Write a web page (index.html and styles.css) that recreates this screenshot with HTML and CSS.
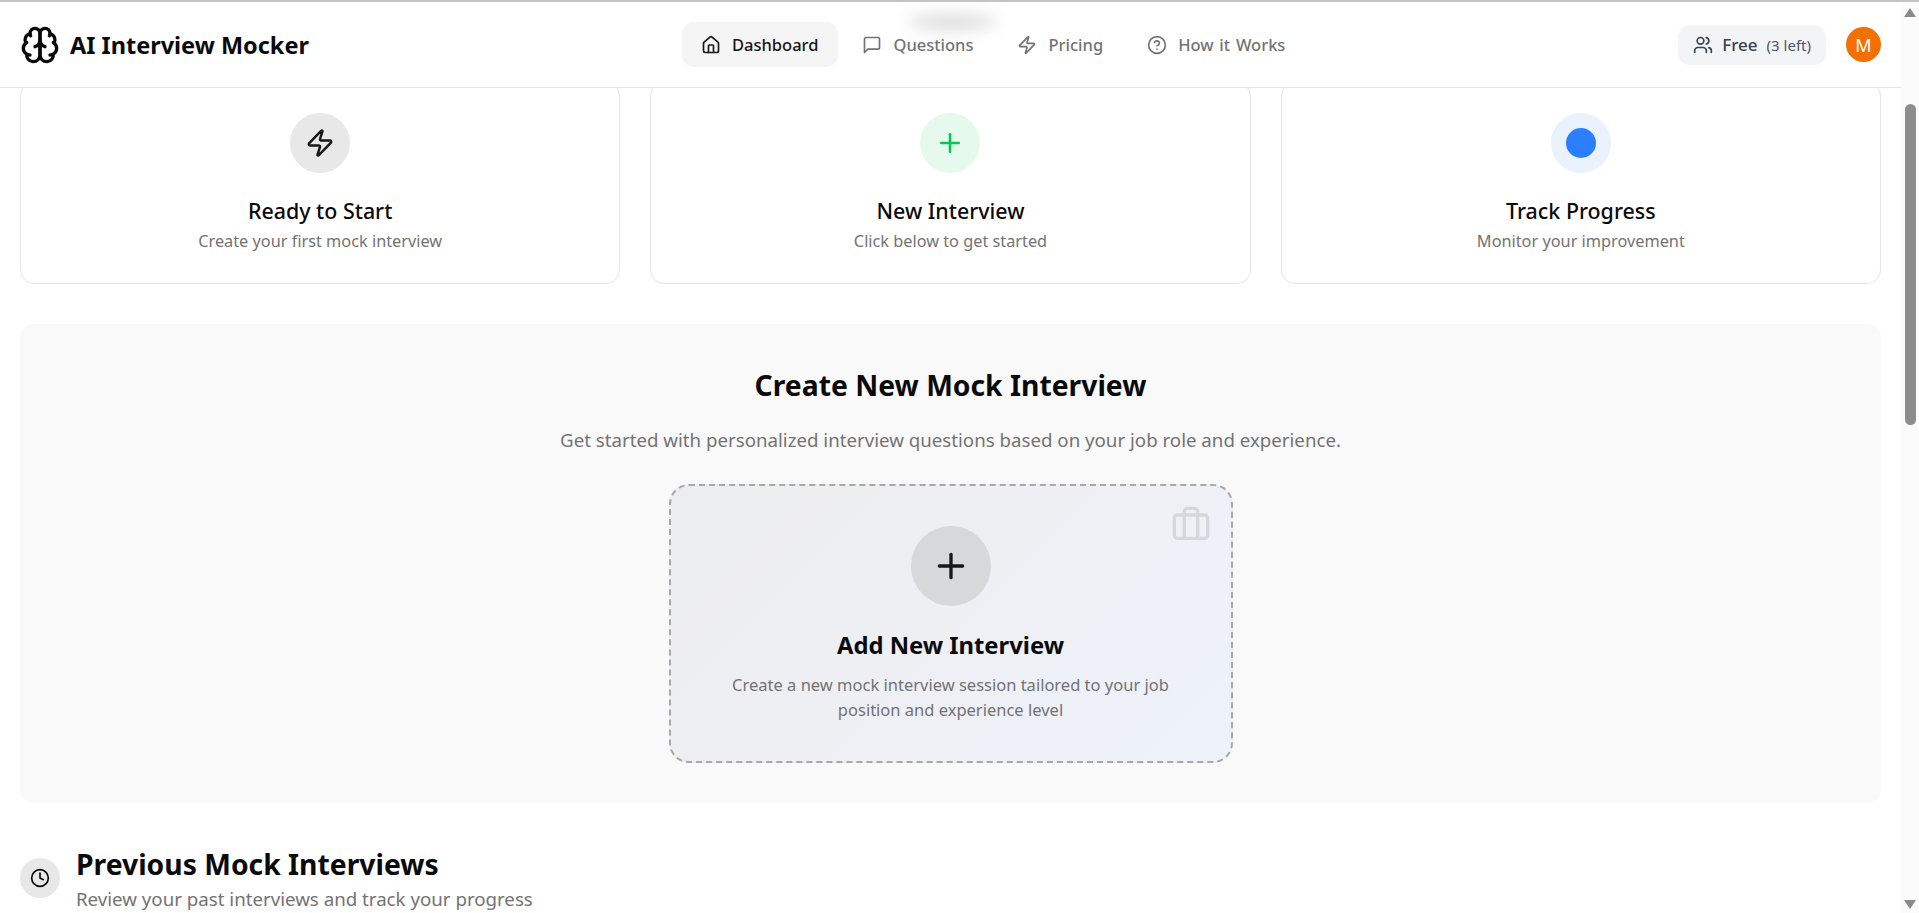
FILE: index.html
```html
<!DOCTYPE html>
<html lang="en">
<head>
    <meta charset="UTF-8">
    <meta name="viewport" content="width=device-width, initial-scale=1.0">
    <title>AI Interview Mocker</title>
    <link rel="stylesheet" href="styles.css">
</head>
<body>
    <div class="page">
        <div class="content">
            <header class="header">
                <div class="header-smudge"></div>
                <div class="brand">
                    <svg class="brand-icon" viewBox="0 0 24 24"><path d="M12 5a3 3 0 1 0-5.997.125 4 4 0 0 0-2.526 5.77 4 4 0 0 0 .556 6.588A4 4 0 1 0 12 18Z"/><path d="M12 5a3 3 0 1 1 5.997.125 4 4 0 0 1 2.526 5.77 4 4 0 0 1-.556 6.588A4 4 0 1 1 12 18Z"/><path d="M15 13a4.5 4.5 0 0 1-3-4 4.5 4.5 0 0 1-3 4"/><path d="M17.599 6.5a3 3 0 0 0 .399-1.375"/><path d="M6.003 5.125A3 3 0 0 0 6.401 6.5"/><path d="M3.477 10.896a4 4 0 0 1 .585-.396"/><path d="M19.938 10.5a4 4 0 0 1 .585.396"/><path d="M6 18a4 4 0 0 1-1.967-.516"/><path d="M19.967 17.484A4 4 0 0 1 18 18"/></svg>
                    <span class="brand-name">AI Interview Mocker</span>
                </div>
                <nav class="nav">
                    <a class="nav-item active">
                        <svg class="icon" viewBox="0 0 24 24"><path d="M15 21v-8a1 1 0 0 0-1-1h-4a1 1 0 0 0-1 1v8"/><path d="M3 10a2 2 0 0 1 .709-1.528l7-5.999a2 2 0 0 1 2.582 0l7 5.999A2 2 0 0 1 21 10v9a2 2 0 0 1-2 2H5a2 2 0 0 1-2-2z"/></svg>
                        Dashboard
                    </a>
                    <a class="nav-item">
                        <svg class="icon" viewBox="0 0 24 24"><path d="M21 15a2 2 0 0 1-2 2H7l-4 4V5a2 2 0 0 1 2-2h14a2 2 0 0 1 2 2z"/></svg>
                        Questions
                    </a>
                    <a class="nav-item">
                        <svg class="icon" viewBox="0 0 24 24"><path d="M4 14a1 1 0 0 1-.78-1.63l9.9-10.2a.5.5 0 0 1 .86.46l-1.92 6.02A1 1 0 0 0 13 10h7a1 1 0 0 1 .78 1.63l-9.9 10.2a.5.5 0 0 1-.86-.46l1.92-6.02A1 1 0 0 0 11 14z"/></svg>
                        Pricing
                    </a>
                    <a class="nav-item">
                        <svg class="icon" viewBox="0 0 24 24"><circle cx="12" cy="12" r="10"/><path d="M9.09 9a3 3 0 0 1 5.83 1c0 2-3 3-3 3"/><path d="M12 17h.01"/></svg>
                        How it Works
                    </a>
                </nav>
                <div class="account">
                    <div class="plan">
                        <svg class="icon" viewBox="0 0 24 24"><path d="M16 21v-2a4 4 0 0 0-4-4H6a4 4 0 0 0-4 4v2"/><circle cx="9" cy="7" r="4"/><path d="M22 21v-2a4 4 0 0 0-3-3.87"/><path d="M16 3.13a4 4 0 0 1 0 7.75"/></svg>
                        <span class="plan-name">Free</span>
                        <span class="plan-left">(3 left)</span>
                    </div>
                    <div class="avatar">M</div>
                </div>
            </header>

            <main class="main">
                <section class="cards">
                    <div class="card">
                        <div class="card-icon gray">
                            <svg class="icon-md" viewBox="0 0 24 24"><path d="M4 14a1 1 0 0 1-.78-1.63l9.9-10.2a.5.5 0 0 1 .86.46l-1.92 6.02A1 1 0 0 0 13 10h7a1 1 0 0 1 .78 1.63l-9.9 10.2a.5.5 0 0 1-.86-.46l1.92-6.02A1 1 0 0 0 11 14z"/></svg>
                        </div>
                        <h3>Ready to Start</h3>
                        <p>Create your first mock interview</p>
                    </div>
                    <div class="card">
                        <div class="card-icon green">
                            <svg class="icon-md" viewBox="0 0 24 24"><path d="M5 12h14"/><path d="M12 5v14"/></svg>
                        </div>
                        <h3>New Interview</h3>
                        <p>Click below to get started</p>
                    </div>
                    <div class="card">
                        <div class="card-icon blue"><div class="dot"></div></div>
                        <h3>Track Progress</h3>
                        <p>Monitor your improvement</p>
                    </div>
                </section>

                <section class="create">
                    <h2>Create New Mock Interview</h2>
                    <p class="create-sub">Get started with personalized interview questions based on your job role and experience.</p>
                    <div class="add-card">
                        <svg class="add-bag" viewBox="0 0 24 24"><path d="M16 20V4a2 2 0 0 0-2-2h-4a2 2 0 0 0-2 2v16"/><rect width="20" height="14" x="2" y="6" rx="2"/></svg>
                        <div class="add-icon">
                            <svg class="icon-lg" viewBox="0 0 24 24"><path d="M5 12h14"/><path d="M12 5v14"/></svg>
                        </div>
                        <h3>Add New Interview</h3>
                        <p>Create a new mock interview session tailored to your job position and experience level</p>
                    </div>
                </section>

                <section class="previous">
                    <div class="previous-icon">
                        <svg class="icon" viewBox="0 0 24 24"><circle cx="12" cy="12" r="10"/><polyline points="12 6 12 12 16 14"/></svg>
                    </div>
                    <div>
                        <h2>Previous Mock Interviews</h2>
                        <p>Review your past interviews and track your progress</p>
                    </div>
                </section>
            </main>
        </div>

        <div class="scrollbar">
            <div class="arrow-up"></div>
            <div class="thumb"></div>
            <div class="arrow-down"></div>
        </div>
    </div>
</body>
</html>
```

FILE: styles.css
```css
* {
    box-sizing: border-box;
}
body {
    margin: 0;
    height: 913px;
    overflow: hidden;
    background-color: white;
    color: #0a0a0a;
    font-family: "Noto Sans", "Open Sans", Arial, sans-serif;
}
h2, h3, p {
    margin: 0;
}
svg {
    fill: none;
    stroke: currentColor;
    stroke-width: 2;
    stroke-linecap: round;
    stroke-linejoin: round;
    flex-shrink: 0;
}
.icon {
    width: 20px;
    height: 20px;
}
.icon-md {
    width: 30px;
    height: 30px;
}
.icon-lg {
    width: 40px;
    height: 40px;
}
.page {
    display: flex;
    height: 913px;
    border-top: 2px solid #c4c4c4;
}
.content {
    flex: 1;
    min-width: 0;
    overflow: hidden;
}

/* header */
.header {
    position: relative;
    z-index: 1;
    display: flex;
    align-items: center;
    height: 86px;
    padding: 0 20px;
    border-bottom: 1px solid #e5e5e5;
    background-color: white;
}
.header-smudge {
    position: absolute;
    left: 908px;
    top: 13px;
    width: 88px;
    height: 14px;
    border-radius: 50%;
    background-color: #d8d8d8;
    filter: blur(8px);
}
.brand {
    display: flex;
    align-items: center;
    gap: 10px;
}
.brand-icon {
    width: 40px;
    height: 40px;
}
.brand-name {
    font-size: 23.5px;
    font-weight: 700;
    white-space: nowrap;
}
.nav {
    position: relative;
    display: flex;
    align-items: center;
    gap: 5px;
    margin-left: 373px;
}
.nav-item {
    display: flex;
    align-items: center;
    gap: 11px;
    height: 45px;
    padding: 0 20px 0 19px;
    border-radius: 12px;
    font-size: 16.5px;
    font-weight: 500;
    word-spacing: 1.5px;
    color: #737373;
}
.nav-item.active {
    background-color: #f5f5f5;
    color: #171717;
}
.account {
    display: flex;
    align-items: center;
    gap: 20px;
    margin-left: auto;
}
.plan {
    display: flex;
    align-items: center;
    gap: 9px;
    height: 40px;
    padding: 0 15px;
    border-radius: 12px;
    background-color: #f3f4f6;
    color: #364153;
}
.plan-name {
    font-size: 17px;
    font-weight: 500;
}
.plan-left {
    font-size: 15px;
    color: #4a5565;
}
.avatar {
    display: flex;
    align-items: center;
    justify-content: center;
    width: 35px;
    height: 35px;
    border-radius: 50%;
    background-color: #f36f00;
    color: white;
    font-size: 18px;
}

/* top cards, scrolled partly under the header */
.main {
    padding: 0 20px;
}
.cards {
    display: grid;
    grid-template-columns: repeat(3, 1fr);
    gap: 30px;
    margin-top: -6px;
}
.card {
    display: flex;
    flex-direction: column;
    align-items: center;
    height: 202px;
    padding-top: 30px;
    border: 1px solid #e5e5e5;
    border-radius: 14px;
    background-color: white;
}
.card h3 {
    margin-top: 23px;
    font-size: 21.4px;
    line-height: 30px;
    font-weight: 500;
}
.card p {
    margin-top: 3px;
    font-size: 16.3px;
    line-height: 24px;
    color: #737373;
}
.card-icon {
    display: flex;
    align-items: center;
    justify-content: center;
    width: 60px;
    height: 60px;
    border-radius: 50%;
}
.card-icon.gray {
    background-color: #e8e8e8;
    color: #171717;
}
.card-icon.green {
    background-color: #e6f9ed;
    color: #00c950;
}
.card-icon.blue {
    background-color: #eaf2fe;
}
.dot {
    width: 30px;
    height: 30px;
    border-radius: 50%;
    background-color: #2b7fff;
}

/* create section */
.create {
    display: flex;
    flex-direction: column;
    align-items: center;
    height: 479px;
    margin-top: 40px;
    padding-top: 40px;
    border-radius: 14px;
    background-color: #f9f9f9;
}
.create h2 {
    font-size: 28.3px;
    line-height: 42px;
    font-weight: 700;
}
.create-sub {
    margin-top: 20px;
    font-size: 18.7px;
    line-height: 28px;
    color: #737373;
}
.add-card {
    position: relative;
    display: flex;
    flex-direction: column;
    align-items: center;
    width: 564px;
    height: 279px;
    margin-top: 30px;
    padding: 40px 40px 0;
    border: 2px dashed #a8a8a8;
    border-radius: 20px;
    background: linear-gradient(135deg, #ededee, #eef2fa);
    text-align: center;
}
.add-bag {
    position: absolute;
    top: 19px;
    right: 20px;
    width: 40px;
    height: 40px;
    color: #d6d7db;
}
.add-icon {
    display: flex;
    align-items: center;
    justify-content: center;
    width: 80px;
    height: 80px;
    border-radius: 50%;
    background-color: #d7d8da;
    color: #171717;
}
.add-card h3 {
    margin-top: 22px;
    font-size: 23.8px;
    line-height: 34px;
    font-weight: 700;
}
.add-card p {
    margin-top: 10px;
    font-size: 16.5px;
    line-height: 25px;
    color: #737373;
}

/* previous interviews */
.previous {
    display: flex;
    align-items: center;
    gap: 16px;
    margin-top: 41px;
}
.previous-icon {
    display: flex;
    align-items: center;
    justify-content: center;
    width: 40px;
    height: 40px;
    margin-bottom: 2px;
    border-radius: 50%;
    background-color: #e8e8e8;
}
.previous h2 {
    font-size: 28.3px;
    line-height: 40px;
    font-weight: 700;
}
.previous p {
    margin-top: 1px;
    font-size: 18.7px;
    line-height: 28px;
    color: #737373;
}

/* window scrollbar */
.scrollbar {
    display: flex;
    flex-direction: column;
    align-items: center;
    width: 18px;
    padding-top: 6px;
    padding-bottom: 4px;
    background-color: #fbfbfb;
}
.arrow-up {
    width: 0;
    height: 0;
    border-left: 6.5px solid transparent;
    border-right: 6.5px solid transparent;
    border-bottom: 9px solid #8a8a8a;
}
.thumb {
    width: 11px;
    height: 321px;
    margin-top: 87px;
    border-radius: 6px;
    background-color: #8c8c8c;
}
.arrow-down {
    width: 0;
    height: 0;
    margin-top: auto;
    border-left: 6.5px solid transparent;
    border-right: 6.5px solid transparent;
    border-top: 9px solid #8a8a8a;
}
```
